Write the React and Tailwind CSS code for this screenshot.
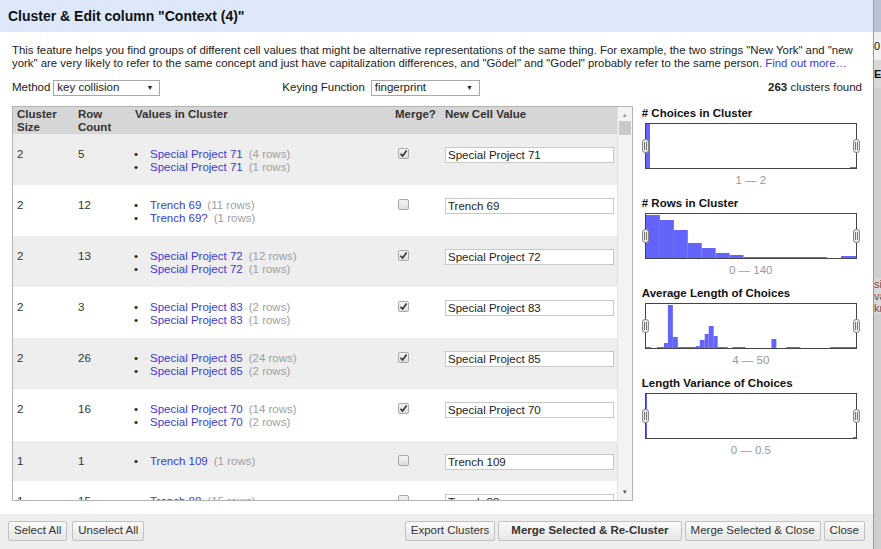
import React from "react";

const rows = [
  { size: 2, count: 5, vals: [["Special Project 71", 4], ["Special Project 71", 1]], merge: true, nv: "Special Project 71" },
  { size: 2, count: 12, vals: [["Trench 69", 11], ["Trench 69?", 1]], merge: false, nv: "Trench 69" },
  { size: 2, count: 13, vals: [["Special Project 72", 12], ["Special Project 72", 1]], merge: true, nv: "Special Project 72" },
  { size: 2, count: 3, vals: [["Special Project 83", 2], ["Special Project 83", 1]], merge: true, nv: "Special Project 83" },
  { size: 2, count: 26, vals: [["Special Project 85", 24], ["Special Project 85", 2]], merge: true, nv: "Special Project 85" },
  { size: 2, count: 16, vals: [["Special Project 70", 14], ["Special Project 70", 2]], merge: true, nv: "Special Project 70" },
  { size: 1, count: 1, vals: [["Trench 109", 1]], merge: false, nv: "Trench 109" },
  { size: 1, count: 15, vals: [["Trench 88", 15]], merge: false, nv: "Trench 88" },
];

function Checkbox({ checked }) {
  return (
    <div className="w-[11px] h-[11px] rounded-[2px] border border-[#a9a9a9] bg-gradient-to-b from-[#f4f4f4] to-[#dedede] flex items-center justify-center">
      {checked && (
        <svg width="9" height="9" viewBox="0 0 9 9">
          <path d="M1.5 4.8 L3.6 7 L7.6 1.6" stroke="#333" strokeWidth="1.6" fill="none" />
        </svg>
      )}
    </div>
  );
}

function Handle({ side }) {
  return (
    <div
      className={
        "absolute top-1/2 -translate-y-1/2 w-[7px] h-[14px] rounded-[3px] border border-[#888] bg-[#e8e8e8] flex items-center justify-center gap-[1px] " +
        (side === "left" ? "left-[-4px]" : "right-[-4px]")
      }
    >
      <div className="w-[1px] h-[8px] bg-[#777]" />
      <div className="w-[1px] h-[8px] bg-[#777]" />
    </div>
  );
}

function Facet({ title, range, bars }) {
  return (
    <div className="h-[90px] flex flex-col">
      <div className="font-bold text-[11.5px] leading-[13px] text-[#111] h-[13px] mt-[1px]">{title}</div>
      <div className="relative mt-[3px] ml-[3px] w-[212px] h-[46px] border border-[#444] bg-white">
        <svg width="210" height="44" viewBox="0 0 211 44" preserveAspectRatio="none" className="block">
          {bars.map(([x1, x2, h], i) => (
            <rect key={i} x={x1} y={44 - h} width={x2 - x1} height={h} fill="#6464fa" />
          ))}
        </svg>
        <Handle side="left" />
        <Handle side="right" />
      </div>
      <div className="mt-[5px] ml-[3px] w-[212px] text-center text-[11.5px] leading-[13px] text-[#999]">{range}</div>
    </div>
  );
}

function Btn({ children, bold }) {
  return (
    <div
      className={
        "h-[20px] flex items-center rounded-[2px] border border-[#c2c2c2] bg-gradient-to-b from-[#fafafa] to-[#e6e6e6] text-[11.5px] text-[#333] " +
        (bold ? "px-[12px] font-bold text-[#111]" : "px-[5px]")
      }
    >
      {children}
    </div>
  );
}

function Select({ value, w }) {
  return (
    <div className={"h-[16px] border border-[#a8a8a8] bg-white flex items-center justify-between pl-[3px] pr-[6px] text-[11.5px] text-[#222] " + w}>
      <span>{value}</span>
      <span className="text-[7px] text-[#222]">▼</span>
    </div>
  );
}

export default function App() {
  return (
    <div className="flex w-[881px] h-[549px] overflow-hidden bg-[#cfcfcf]" style={{ fontFamily: '"Liberation Sans", Arial, sans-serif' }}>
      <div className="w-[874px] h-[549px] flex flex-col bg-white border-r border-[#9a9a9a] shrink-0">
        <div className="h-[32px] bg-[#dde9fa] flex items-center pl-[8px] shrink-0">
          <span className="font-bold text-[14px] text-[#111]">Cluster &amp; Edit column "Context (4)"</span>
        </div>
        <div className="flex-1 flex flex-col pl-[12px] pr-[12px] pt-[12px]">
          <p className="text-[11.4px] leading-[13px] text-[#222] w-[849px]">
            This feature helps you find groups of different cell values that might be alternative representations of the same thing. For example, the two strings "New York" and "new york" are very likely to refer to the same concept and just have capitalization differences, and "Gödel" and "Godel" probably refer to the same person.{" "}
            <span className="text-[#3a3ad8]">Find out more…</span>
          </p>
          <div className="mt-[10px] h-[16px] flex items-center text-[11.5px] text-[#222]">
            <span className="mr-[3px]">Method</span>
            <Select value="key collision" w="w-[107px]" />
            <span className="ml-[122px] mr-[6px]">Keying Function</span>
            <Select value="fingerprint" w="w-[109px]" />
            <span className="ml-auto mr-[-1px]">
              <b>263</b> clusters found
            </span>
          </div>
          <div className="mt-[10px] flex">
            <div className="w-[623px] h-[395px] border border-[#b4b4b4] flex overflow-hidden">
              <div className="w-[606px] flex flex-col overflow-hidden">
                <div className="h-[27px] shrink-0 bg-[#d6d6d6] grid grid-cols-[61px_57px_260px_50px_178px] text-[11.5px] leading-[13px] font-bold text-[#333] pt-[1px]">
                  <div className="pl-[4px]">Cluster<br />Size</div>
                  <div className="pl-[4px]">Row<br />Count</div>
                  <div className="pl-[4px]">Values in Cluster</div>
                  <div className="pl-[4px]">Merge?</div>
                  <div className="pl-[4px]">New Cell Value</div>
                </div>
                {rows.map((r, i) => (
                  <div
                    key={i}
                    className={
                      "shrink-0 grid grid-cols-[61px_57px_260px_50px_178px] text-[11.5px] leading-[13px] text-[#333] pt-[13px] " +
                      (i % 2 === 0 ? "bg-[#eeeeee] " : "bg-white ") +
                      (r.vals.length === 2 ? (i === 5 ? "h-[52px]" : "h-[51px]") : "h-[40px]")
                    }
                  >
                    <div className="pl-[4px] pt-[1px]">{r.size}</div>
                    <div className="pl-[4px] pt-[1px]">{r.count}</div>
                    <div className="pl-[3px] pt-[1px]">
                      {r.vals.map(([v, n], j) => (
                        <div key={j} className="flex">
                          <span className="w-[16px] text-[#222]">•</span>
                          <span className="text-[#3a3ad8]">{v}</span>
                          <span className="ml-[6px] text-[#a0a0a0]">({n} rows)</span>
                        </div>
                      ))}
                    </div>
                    <div className="pl-[7px] pt-[1px]">
                      <Checkbox checked={r.merge} />
                    </div>
                    <div className="pl-[4px]">
                      <div className="w-[169px] h-[16px] border border-[#c8c8c8] bg-white pl-[2px] flex items-center text-[11.5px] text-[#222]">
                        {r.nv}
                      </div>
                    </div>
                  </div>
                ))}
              </div>
              <div className="w-[15px] bg-[#f3f3f3] border-l border-[#e2e2e2] flex flex-col items-center">
                <span className="text-[6px] text-[#999] mt-[4px] leading-[8px]">▲</span>
                <div className="mt-[2px] w-[12px] h-[14px] bg-[#c9c9c9]" />
                <div className="flex-1" />
                <span className="text-[6px] text-[#555] mb-[4px] leading-[8px]">▼</span>
              </div>
            </div>
            <div className="ml-[9px] w-[220px] flex flex-col">
              <Facet
                title="# Choices in Cluster"
                range="1 — 2"
                bars={[[0, 4, 44], [205, 211, 1]]}
              />
              <Facet
                title="# Rows in Cluster"
                range="0 — 140"
                bars={[
                  [0, 14, 43], [14, 28, 38], [28, 42, 28], [42, 56, 15], [56, 70, 10],
                  [70, 84, 5], [84, 98, 3], [98, 182, 1], [196, 211, 2],
                ]}
              />
              <Facet
                title="Average Length of Choices"
                range="4 — 50"
                bars={[
                  [0, 5, 1], [11, 18, 1], [18, 22, 5], [22, 27, 43], [27, 32, 11], [32, 50, 1],
                  [50, 54, 2], [54, 59, 8], [59, 63, 14], [63, 68, 22], [68, 72, 12], [72, 82, 1],
                  [87, 100, 1], [126, 131, 9], [141, 155, 1], [185, 196, 1], [196, 211, 1],
                ]}
              />
              <Facet
                title="Length Variance of Choices"
                range="0 — 0.5"
                bars={[[0, 1, 44], [208, 211, 1]]}
              />
            </div>
          </div>
        </div>
        <div className="h-[35px] shrink-0 bg-[#eeeeee] flex items-start pt-[7px] pl-[8px] pr-[8px] gap-[5px]">
          <Btn>Select All</Btn>
          <Btn>Unselect All</Btn>
          <div className="flex-1" />
          <div className="flex gap-[3px]">
            <Btn>Export Clusters</Btn>
            <Btn bold>Merge Selected &amp; Re-Cluster</Btn>
            <Btn>Merge Selected &amp; Close</Btn>
            <Btn>Close</Btn>
          </div>
        </div>
      </div>
      <div className="flex-1 flex flex-col text-[11px] leading-[12px]">
        <div className="h-[32px] bg-[#b9c3d3]" />
        <div className="h-[28px] bg-[#f0f0f0] flex items-center text-[#111]">0</div>
        <div className="h-[28px] bg-[#d8d8d8] flex items-center text-[#111] font-bold">E</div>
        <div className="h-[190px] bg-[#cfcfcf]" />
        <div className="bg-[#d8d8d8] text-[#7a4a4a]">si<br />va<br />kr</div>
        <div className="flex-1 bg-[#cfcfcf]" />
      </div>
    </div>
  );
}
